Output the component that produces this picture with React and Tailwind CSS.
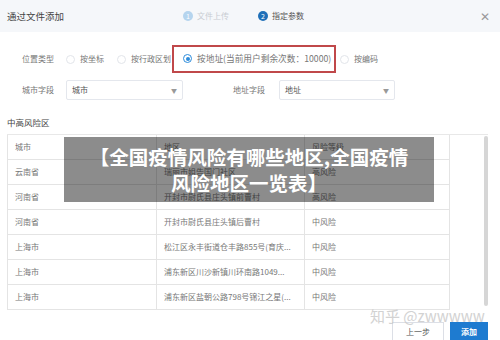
import React from 'react';

const rows = [
  { city: '云南省', area: '瑞丽市姐告国门社区', level: '高风险' },
  { city: '河南省', area: '开封市尉氏县庄头镇前曹村', level: '高风险' },
  { city: '河南省', area: '开封市尉氏县庄头镇后曹村', level: '中风险' },
  { city: '上海市', area: '松江区永丰街道仓丰路855号(育庆...', level: '中风险' },
  { city: '上海市', area: '浦东新区川沙新镇川环南路1049...', level: '中风险' },
  { city: '上海市', area: '浦东新区盐朝公路798号锦江之星(...', level: '中风险' },
];

const Radio = ({ checked, label }) => (
  <div className="flex items-center gap-[5px]">
    <span
      className={`w-[9px] h-[9px] rounded-full border flex items-center justify-center ${
        checked ? 'border-[#2d8cdb]' : 'border-[#e2e5ea]'
      }`}
    >
      {checked && <span className="w-[4px] h-[4px] rounded-full bg-[#2d8cdb]" />}
    </span>
    <span className="whitespace-nowrap">{label}</span>
  </div>
);

const Select = ({ value, width }) => (
  <div className={`h-[20px] ${width} border border-[#e4e7ed] rounded-[2px] flex items-center justify-between px-[5px] bg-white`}>
    <span className="text-[#555]">{value}</span>
    <span className="text-[6px] text-[#999]">▼</span>
  </div>
);

export default function App() {
  return (
    <div
      className="relative w-[500px] h-[340px] overflow-hidden bg-white text-[8px] text-[#777]"
      style={{ fontFamily: '"Noto Sans CJK SC", "Noto Sans", sans-serif' }}
    >
      {/* header */}
      <div className="h-[32px] bg-[#f5f7fa] flex items-center pl-[7px] pr-[10px]">
        <span className="text-[9.5px] text-[#444] w-[176px]">通过文件添加</span>
        <div className="flex items-center gap-[4px] w-[75px]">
          <span className="w-[10px] h-[10px] rounded-full bg-[#b5d4ee] text-white text-[7px] flex items-center justify-center">1</span>
          <span className="text-[#c8ccd2]">文件上传</span>
        </div>
        <div className="flex items-center gap-[4px]">
          <span className="w-[10px] h-[10px] rounded-full bg-[#1f6fb8] text-white text-[7px] flex items-center justify-center">2</span>
          <span className="text-[#555]">指定参数</span>
        </div>
        <span className="ml-auto text-[12px] text-[#999] leading-none">✕</span>
      </div>

      {/* radio row */}
      <div className="flex items-center mt-[13px] pl-[22px] h-[28px]">
        <span className="w-[44px]">位置类型</span>
        <Radio label="按坐标" />
        <div className="ml-[13px]">
          <Radio label="按行政区划" />
        </div>
        <div className="ml-[1px] w-[164px] border-2 border-[#c0484a] h-[28px] flex items-center pl-[9px] bg-white text-[8.7px]">
          <Radio checked label="按地址(当前用户剩余次数：10000)" />
        </div>
        <div className="ml-[4px]">
          <Radio label="按编码" />
        </div>
      </div>

      {/* select row */}
      <div className="flex items-center mt-[7px] pl-[22px]">
        <span className="w-[44px]">城市字段</span>
        <Select value="城市" width="w-[117px]" />
        <span className="ml-[50px] w-[46px]">地址字段</span>
        <Select value="地址" width="w-[116px]" />
      </div>

      <div className="mt-[16px] pl-[7px] text-[#444] text-[8.5px]">中高风险区</div>

      {/* table */}
      <div className="mt-[5px] ml-[7px] w-[481px] border-t border-[#e8e8e8] flex">
        <div className="w-[443px]">
          <div className="grid grid-cols-[148px_148px_147px] border-l border-r border-b border-[#e4e4e4] h-[25px] items-center">
            <span className="pl-[7px]">城市</span>
            <span className="pl-[7px] border-l border-[#e4e4e4] h-full flex items-center">地区</span>
            <span className="pl-[7px] border-l border-[#e4e4e4] h-full flex items-center">风险等级</span>
          </div>
          {rows.map((r, i) => (
            <div
              key={i}
              className="grid grid-cols-[148px_148px_147px] border-l border-r border-b border-[#e4e4e4] h-[25px] items-center"
            >
              <span className="pl-[7px]">{r.city}</span>
              <span className="pl-[7px] border-l border-[#e4e4e4] h-full flex items-center whitespace-nowrap overflow-hidden">{r.area}</span>
              <span className="pl-[7px] border-l border-[#e4e4e4] h-full flex items-center">{r.level}</span>
            </div>
          ))}
        </div>
        <div className="flex-1 flex justify-end">
          <div className="w-[4px] h-[170px] bg-[#d6d6d6] rounded-[2px] mt-[1px]" />
        </div>
      </div>

      {/* footer buttons */}
      <div className="absolute right-[12px] top-[322px] flex gap-[6px]">
        <div className="w-[52px] h-[20px] border border-[#dcdfe6] bg-white text-[#555] flex items-center justify-center">上一步</div>
        <div className="w-[38px] h-[20px] bg-[#1e7bd0] text-white flex items-center justify-center font-bold">添加</div>
      </div>

      {/* watermark */}
      <div className="absolute left-[370px] top-[308px] text-[15px] text-[#c8c8c8] opacity-80 leading-none whitespace-nowrap">
        知乎 @zwwwww
      </div>

      {/* title overlay */}
      <div className="absolute left-[64px] top-[137px] w-[370px] h-[65px] bg-black/45 flex flex-col items-center justify-center text-white font-bold text-[19.5px] leading-[26px]">
        <span>【全国疫情风险有哪些地区,全国疫情</span>
        <span>风险地区一览表】</span>
      </div>
    </div>
  );
}
